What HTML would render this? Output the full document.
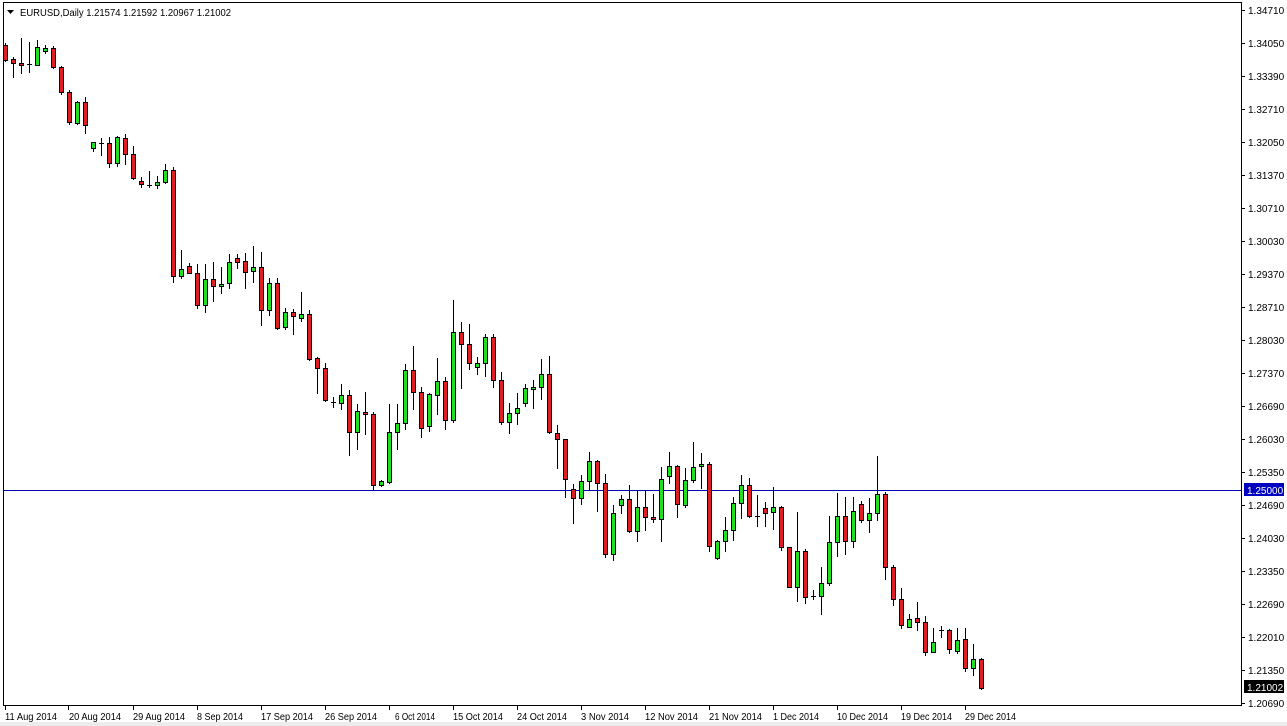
<!DOCTYPE html>
<html><head><meta charset="utf-8"><style>
html,body{margin:0;padding:0;background:#fff;width:1287px;height:726px;overflow:hidden}
svg{display:block}
text{font-family:"Liberation Sans",sans-serif;font-size:10px;fill:#000}
.r{fill:#e02020;stroke:#000;stroke-width:1}
.g{fill:#20e020;stroke:#000;stroke-width:1}
.w{stroke:#000;stroke-width:1}
</style></head><body>
<svg width="1287" height="726" viewBox="0 0 1287 726" xmlns="http://www.w3.org/2000/svg">
<rect x="0" y="0" width="1287" height="726" fill="#fff"/>
<rect x="0" y="722" width="1287" height="4" fill="#ececec"/>
<rect x="3.5" y="2.5" width="1238" height="703" fill="#fff" stroke="#000"/>
<line x1="4" y1="490.5" x2="1241" y2="490.5" stroke="#0000b0" stroke-width="1"/>
<g id="c" shape-rendering="crispEdges">
<path class="w" d="M5.5 43V62M13.5 57V78M21.5 38V74M29.5 42V73M37.5 40V66M45.5 45V54M53.5 46V69M61.5 66V95M69.5 90V125M77.5 101V125M85.5 97V134M93.5 142V152M101.5 138V156M109.5 137V168M117.5 136V167M125.5 134V165M133.5 146V180M141.5 177V188M149.5 171V188M157.5 176V189M165.5 164V184M173.5 167V283M181.5 250V279M189.5 263V274M197.5 264V309M205.5 264V313M213.5 262V302M221.5 267V294M229.5 254V289M237.5 254V269M245.5 253V289M253.5 246V283M261.5 252V326M269.5 278V316M277.5 278V330M285.5 308V330M293.5 309V335M301.5 292V322M309.5 310V361M317.5 357V394M325.5 363V402M333.5 397V408M341.5 384V410M349.5 390V456M357.5 404V450M365.5 392V435M373.5 412V490M381.5 480V487M389.5 404V484M397.5 404V450M405.5 364V430M413.5 346V410M421.5 387V438M429.5 393V432M437.5 358V415M445.5 377V430M453.5 300V423M461.5 322V389M469.5 324V370M477.5 357V375M485.5 334V377M493.5 334V388M501.5 372V425M509.5 403V434M517.5 393V425M525.5 384V407M533.5 380V409M541.5 359V400M549.5 356V434M557.5 425V469M565.5 439V498M573.5 484V524M581.5 475V505M589.5 452V490M597.5 460V512M605.5 474V558M613.5 505V561M621.5 495V514M629.5 485V533M637.5 490V542M645.5 490V531M653.5 494V523M661.5 467V542M669.5 452V484M677.5 465V518M685.5 468V508M693.5 442V483M701.5 453V489M709.5 462V552M717.5 540V560M725.5 517V552M733.5 497V541M741.5 475V519M749.5 478V518M757.5 495V527M765.5 502V527M773.5 487V530M781.5 506V551M789.5 547V588M797.5 512V602M805.5 549V604M813.5 590V600M821.5 567V615M829.5 516V586M837.5 493V557M845.5 497V555M853.5 497V548M861.5 501V523M869.5 498V533M877.5 456V521M885.5 492V580M893.5 565V606M901.5 588V629M909.5 614V628M917.5 602V631M925.5 616V656M933.5 628V653M941.5 626V638M949.5 629V654M957.5 628V654M965.5 628V672M973.5 644V676M981.5 658V690"/>
<path class="w" d="M27 64.5H32M99 143.5H104M147 185.5H152M331 402.5H336M755 516.5H760M811 596.5H816M939 630.5H944"/>
<g class="r">
<rect x="3.5" y="45.5" width="4" height="15"/><rect x="11.5" y="59.5" width="4" height="4"/><rect x="19.5" y="63.5" width="4" height="2"/><rect x="51.5" y="48.5" width="4" height="19"/><rect x="59.5" y="67.5" width="4" height="25"/><rect x="67.5" y="92.5" width="4" height="30"/><rect x="83.5" y="102.5" width="4" height="23"/><rect x="107.5" y="143.5" width="4" height="20"/><rect x="123.5" y="138.5" width="4" height="16"/><rect x="131.5" y="154.5" width="4" height="24"/><rect x="139.5" y="181.5" width="4" height="3"/><rect x="171.5" y="170.5" width="4" height="106"/><rect x="187.5" y="266.5" width="4" height="7"/><rect x="195.5" y="273.5" width="4" height="32"/><rect x="211.5" y="279.5" width="4" height="7"/><rect x="235.5" y="258.5" width="4" height="4"/><rect x="243.5" y="261.5" width="4" height="11"/><rect x="259.5" y="267.5" width="4" height="43"/><rect x="275.5" y="283.5" width="4" height="45"/><rect x="291.5" y="312.5" width="4" height="4"/><rect x="307.5" y="314.5" width="4" height="45"/><rect x="315.5" y="358.5" width="4" height="10"/><rect x="323.5" y="368.5" width="4" height="32"/><rect x="347.5" y="395.5" width="4" height="37"/><rect x="363.5" y="412.5" width="4" height="2"/><rect x="371.5" y="414.5" width="4" height="71"/><rect x="411.5" y="370.5" width="4" height="22"/><rect x="419.5" y="392.5" width="4" height="36"/><rect x="443.5" y="381.5" width="4" height="39"/><rect x="459.5" y="332.5" width="4" height="12"/><rect x="467.5" y="344.5" width="4" height="19"/><rect x="491.5" y="337.5" width="4" height="43"/><rect x="499.5" y="380.5" width="4" height="42"/><rect x="547.5" y="374.5" width="4" height="58"/><rect x="555.5" y="433.5" width="4" height="6"/><rect x="563.5" y="439.5" width="4" height="40"/><rect x="571.5" y="489.5" width="4" height="9"/><rect x="595.5" y="461.5" width="4" height="22"/><rect x="603.5" y="483.5" width="4" height="71"/><rect x="627.5" y="499.5" width="4" height="32"/><rect x="643.5" y="507.5" width="4" height="10"/><rect x="651.5" y="517.5" width="4" height="2"/><rect x="675.5" y="466.5" width="4" height="38"/><rect x="707.5" y="464.5" width="4" height="82"/><rect x="747.5" y="485.5" width="4" height="31"/><rect x="763.5" y="508.5" width="4" height="5"/><rect x="779.5" y="507.5" width="4" height="40"/><rect x="787.5" y="547.5" width="4" height="40"/><rect x="803.5" y="551.5" width="4" height="46"/><rect x="843.5" y="516.5" width="4" height="25"/><rect x="859.5" y="504.5" width="4" height="16"/><rect x="883.5" y="494.5" width="4" height="73"/><rect x="891.5" y="567.5" width="4" height="32"/><rect x="899.5" y="599.5" width="4" height="26"/><rect x="915.5" y="618.5" width="4" height="4"/><rect x="923.5" y="622.5" width="4" height="30"/><rect x="947.5" y="630.5" width="4" height="19"/><rect x="963.5" y="639.5" width="4" height="29"/><rect x="979.5" y="659.5" width="4" height="29"/>
</g>
<g class="g">
<rect x="35.5" y="47.5" width="4" height="18"/><rect x="43.5" y="48.5" width="4" height="3"/><rect x="75.5" y="102.5" width="4" height="21"/><rect x="91.5" y="142.5" width="4" height="6"/><rect x="115.5" y="137.5" width="4" height="26"/><rect x="155.5" y="182.5" width="4" height="3"/><rect x="163.5" y="170.5" width="4" height="12"/><rect x="179.5" y="269.5" width="4" height="7"/><rect x="203.5" y="279.5" width="4" height="26"/><rect x="219.5" y="284.5" width="4" height="2"/><rect x="227.5" y="262.5" width="4" height="21"/><rect x="251.5" y="267.5" width="4" height="4"/><rect x="267.5" y="283.5" width="4" height="27"/><rect x="283.5" y="312.5" width="4" height="15"/><rect x="299.5" y="314.5" width="4" height="4"/><rect x="339.5" y="395.5" width="4" height="8"/><rect x="355.5" y="411.5" width="4" height="21"/><rect x="379.5" y="481.5" width="4" height="4"/><rect x="387.5" y="432.5" width="4" height="50"/><rect x="395.5" y="423.5" width="4" height="9"/><rect x="403.5" y="370.5" width="4" height="53"/><rect x="427.5" y="394.5" width="4" height="32"/><rect x="435.5" y="381.5" width="4" height="14"/><rect x="451.5" y="332.5" width="4" height="88"/><rect x="475.5" y="363.5" width="4" height="4"/><rect x="483.5" y="337.5" width="4" height="26"/><rect x="507.5" y="413.5" width="4" height="9"/><rect x="515.5" y="408.5" width="4" height="5"/><rect x="523.5" y="388.5" width="4" height="15"/><rect x="531.5" y="387.5" width="4" height="2"/><rect x="539.5" y="374.5" width="4" height="13"/><rect x="579.5" y="481.5" width="4" height="17"/><rect x="587.5" y="461.5" width="4" height="20"/><rect x="611.5" y="513.5" width="4" height="41"/><rect x="619.5" y="499.5" width="4" height="6"/><rect x="635.5" y="507.5" width="4" height="24"/><rect x="659.5" y="479.5" width="4" height="40"/><rect x="667.5" y="466.5" width="4" height="10"/><rect x="683.5" y="480.5" width="4" height="25"/><rect x="691.5" y="467.5" width="4" height="13"/><rect x="699.5" y="464.5" width="4" height="2"/><rect x="715.5" y="541.5" width="4" height="17"/><rect x="723.5" y="530.5" width="4" height="11"/><rect x="731.5" y="503.5" width="4" height="27"/><rect x="739.5" y="485.5" width="4" height="18"/><rect x="771.5" y="507.5" width="4" height="5"/><rect x="795.5" y="551.5" width="4" height="36"/><rect x="819.5" y="583.5" width="4" height="13"/><rect x="827.5" y="542.5" width="4" height="41"/><rect x="835.5" y="516.5" width="4" height="26"/><rect x="851.5" y="511.5" width="4" height="30"/><rect x="867.5" y="513.5" width="4" height="7"/><rect x="875.5" y="494.5" width="4" height="19"/><rect x="907.5" y="619.5" width="4" height="8"/><rect x="931.5" y="642.5" width="4" height="10"/><rect x="955.5" y="640.5" width="4" height="11"/><rect x="971.5" y="659.5" width="4" height="9"/>
</g>
</g>
<path d="M7 10h7l-3.5 4z" fill="#000"/>
<text x="20" y="16" textLength="211" lengthAdjust="spacingAndGlyphs">EURUSD,Daily  1.21574 1.21592 1.20967 1.21002</text>
<g>
<path class="w" d="M1242 10.5h3M1242 43.5h3M1242 76.5h3M1242 109.5h3M1242 142.5h3M1242 175.5h3M1242 208.5h3M1242 241.5h3M1242 274.5h3M1242 307.5h3M1242 340.5h3M1242 373.5h3M1242 406.5h3M1242 439.5h3M1242 472.5h3M1242 505.5h3M1242 538.5h3M1242 571.5h3M1242 604.5h3M1242 637.5h3M1242 670.5h3M1242 703.5h3"/>
<text x="1248" y="14">1.34710</text><text x="1248" y="47">1.34050</text><text x="1248" y="80">1.33390</text><text x="1248" y="113">1.32710</text><text x="1248" y="146">1.32050</text><text x="1248" y="179">1.31370</text><text x="1248" y="212">1.30710</text><text x="1248" y="245">1.30030</text><text x="1248" y="278">1.29370</text><text x="1248" y="311">1.28710</text><text x="1248" y="344">1.28030</text><text x="1248" y="377">1.27370</text><text x="1248" y="410">1.26690</text><text x="1248" y="443">1.26030</text><text x="1248" y="476">1.25350</text><text x="1248" y="509">1.24690</text><text x="1248" y="542">1.24030</text><text x="1248" y="575">1.23350</text><text x="1248" y="608">1.22690</text><text x="1248" y="641">1.22010</text><text x="1248" y="674">1.21350</text><text x="1248" y="707">1.20690</text>
<rect x="1244" y="483" width="40" height="13" fill="#0000c0"/>
<text x="1247" y="494" style="fill:#fff">1.25000</text>
<rect x="1244" y="680" width="40" height="13" fill="#000"/>
<text x="1247" y="691" style="fill:#fff">1.21002</text>
</g>
<path class="w" d="M5.5 706v4M68.5 706v4M133.5 706v4M197.5 706v4M261.5 706v4M325.5 706v4M389.5 706v4M453.5 706v4M517.5 706v4M581.5 706v4M645.5 706v4M709.5 706v4M773.5 706v4M837.5 706v4M901.5 706v4M965.5 706v4"/>
<g>
<text x="5" y="720" textLength="52" lengthAdjust="spacingAndGlyphs">11 Aug 2014</text><text x="69" y="720" textLength="52" lengthAdjust="spacingAndGlyphs">20 Aug 2014</text><text x="133" y="720" textLength="52" lengthAdjust="spacingAndGlyphs">29 Aug 2014</text><text x="197" y="720" textLength="46" lengthAdjust="spacingAndGlyphs">8 Sep 2014</text><text x="261" y="720" textLength="52" lengthAdjust="spacingAndGlyphs">17 Sep 2014</text><text x="325" y="720" textLength="52" lengthAdjust="spacingAndGlyphs">26 Sep 2014</text><text x="395" y="720" textLength="40" lengthAdjust="spacingAndGlyphs">6 Oct 2014</text><text x="453" y="720" textLength="50" lengthAdjust="spacingAndGlyphs">15 Oct 2014</text><text x="517" y="720" textLength="50" lengthAdjust="spacingAndGlyphs">24 Oct 2014</text><text x="581" y="720" textLength="48" lengthAdjust="spacingAndGlyphs">3 Nov 2014</text><text x="645" y="720" textLength="53" lengthAdjust="spacingAndGlyphs">12 Nov 2014</text><text x="709" y="720" textLength="53" lengthAdjust="spacingAndGlyphs">21 Nov 2014</text><text x="773" y="720" textLength="46" lengthAdjust="spacingAndGlyphs">1 Dec 2014</text><text x="837" y="720" textLength="51" lengthAdjust="spacingAndGlyphs">10 Dec 2014</text><text x="901" y="720" textLength="51" lengthAdjust="spacingAndGlyphs">19 Dec 2014</text><text x="965" y="720" textLength="51" lengthAdjust="spacingAndGlyphs">29 Dec 2014</text>
</g>
</svg>
</body></html>
